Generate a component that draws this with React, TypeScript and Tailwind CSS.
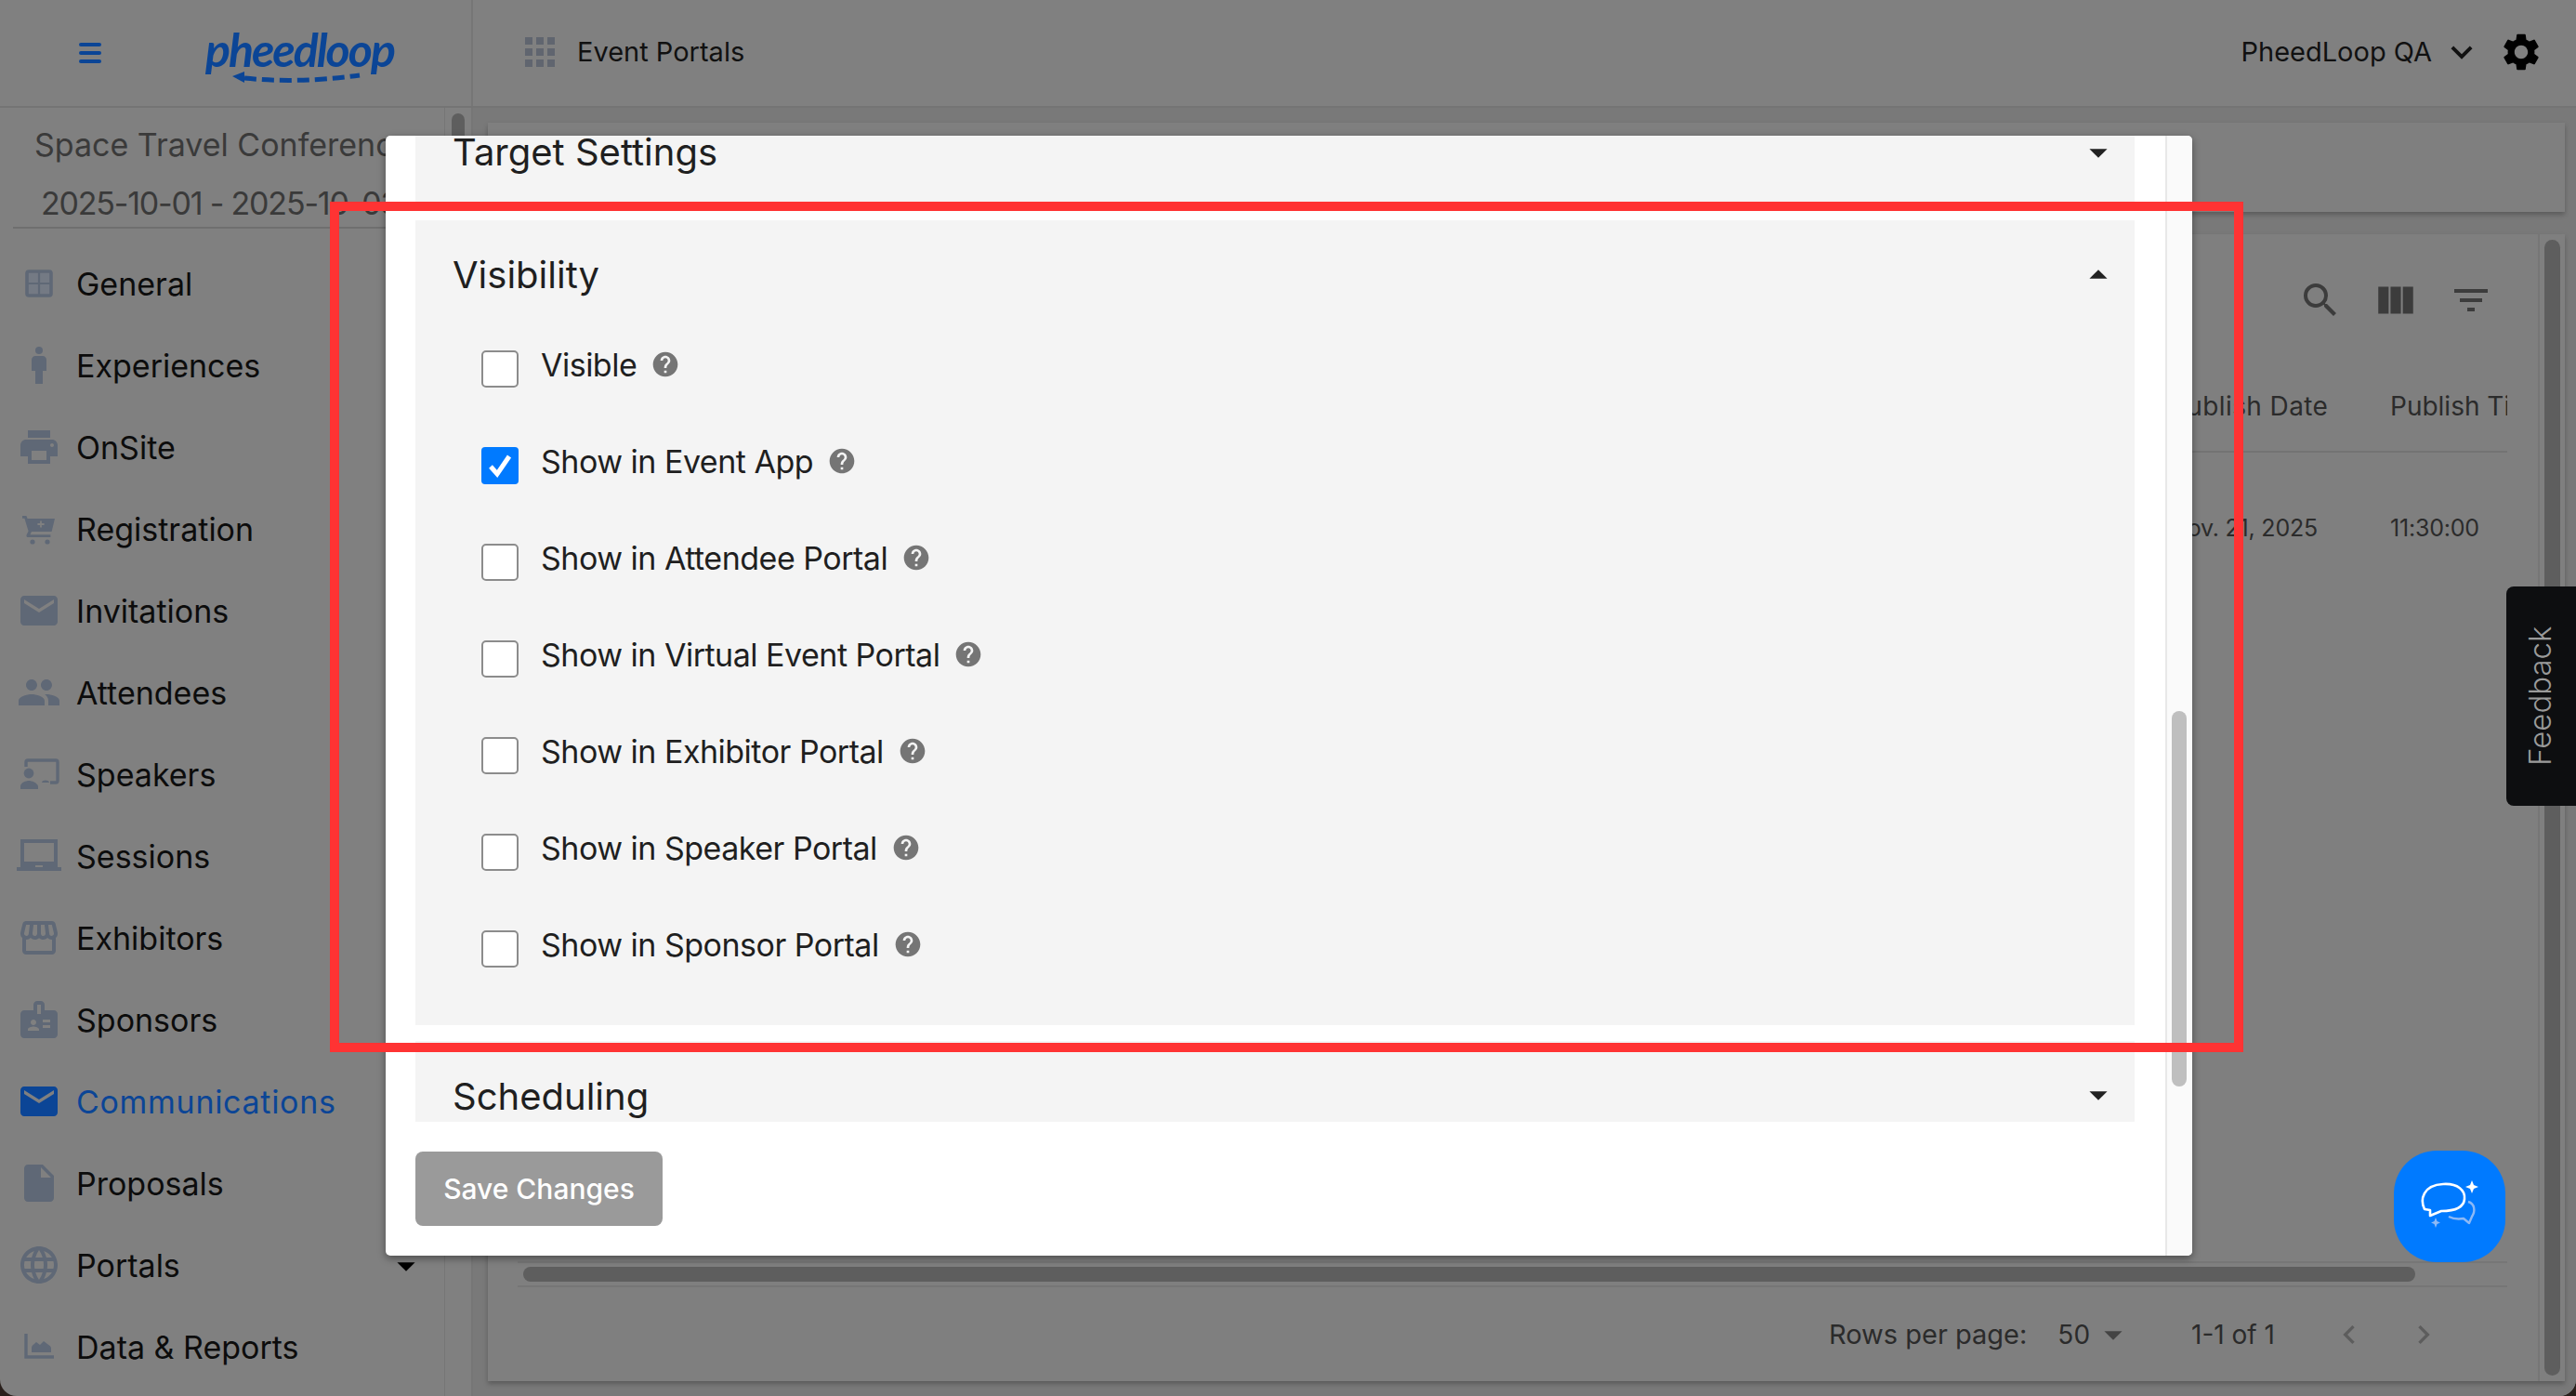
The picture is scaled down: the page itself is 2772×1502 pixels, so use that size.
import {
  MdApps,
  MdArrowDropDown,
  MdArrowDropUp,
  MdBadge,
  MdChevronLeft,
  MdChevronRight,
  MdEmail,
  MdFilterList,
  MdHelp,
  MdInsertDriveFile,
  MdKeyboardArrowDown,
  MdLanguage,
  MdLaptopChromebook,
  MdMan,
  MdPeople,
  MdPrint,
  MdSearch,
  MdSettings,
  MdStorefront,
  MdViewColumn,
} from 'react-icons/md';

type IconProps = { size?: number; className?: string };

function GeneralIcon({ size = 48, className }: IconProps) {
  return (
    <svg width={size} height={size} viewBox="0 0 24 24" className={className} fill="none">
      <rect x="5.5" y="5.5" width="13" height="13" rx="1" stroke="currentColor" strokeWidth="1.8" fill="#747a84" />
      <path d="M12 5.5v13M5.5 12h13" stroke="currentColor" strokeWidth="1.1" />
    </svg>
  );
}

// filled cart with a plus cut out, the md one is only an outline
function CartPlusIcon({ size = 48, className }: IconProps) {
  return (
    <svg width={size} height={size} viewBox="0 0 24 24" className={className} fill="currentColor">
      <path d="M3 5h2.2l.6 1.5H20.5l-1.7 7H8l-.8 1.6h11v1.4H6.2c-.8 0-1.2-.6-.9-1.3l1-1.9L4.2 6.4H3z" />
      <circle cx="8.5" cy="19" r="1.3" />
      <circle cx="16.5" cy="19" r="1.3" />
      <path d="M13 7.7v3.6M11.2 9.5h3.6" stroke="#808080" strokeWidth="0.9" />
    </svg>
  );
}

function SpeakerIcon({ size = 48, className }: IconProps) {
  return (
    <svg width={size} height={size} viewBox="0 0 24 24" className={className} fill="currentColor">
      <path d="M5 8V5.5q0-1 1-1h15q1 0 1 1v10q0 1-1 1h-3" fill="none" stroke="currentColor" strokeWidth="1.7" />
      <circle cx="6.5" cy="11.5" r="2.7" />
      <path d="M2 20v-1.5c0-2 3-3 4.5-3s4.5 1 5 3V20z" />
      <path d="M13.5 16.5c.3-1.6 3.6-1.6 4 0z" />
    </svg>
  );
}

function ReportIcon({ size = 48, className }: IconProps) {
  return (
    <svg width={size} height={size} viewBox="0 0 24 24" className={className} fill="currentColor">
      <path d="M5 5v12.5h15" fill="none" stroke="currentColor" strokeWidth="1.7" />
      <path d="M8 15v-2.5c0-.8.5-1.2 1-1.6l1.5-1.4 2 1.5 2-2 3 2.2c.8.6 1 1 1 1.8v2z" />
    </svg>
  );
}

const navItems = [
  { label: 'General', icon: GeneralIcon },
  { label: 'Experiences', icon: MdMan },
  { label: 'OnSite', icon: MdPrint },
  { label: 'Registration', icon: CartPlusIcon },
  { label: 'Invitations', icon: MdEmail },
  { label: 'Attendees', icon: MdPeople },
  { label: 'Speakers', icon: SpeakerIcon },
  { label: 'Sessions', icon: MdLaptopChromebook },
  { label: 'Exhibitors', icon: MdStorefront },
  { label: 'Sponsors', icon: MdBadge },
  { label: 'Communications', icon: MdEmail, active: true },
  { label: 'Proposals', icon: MdInsertDriveFile },
  { label: 'Portals', icon: MdLanguage, caret: true },
  { label: 'Data & Reports', icon: ReportIcon },
];

const visibilityRows = [
  { label: 'Visible' },
  { label: 'Show in Event App', checked: true },
  { label: 'Show in Attendee Portal' },
  { label: 'Show in Virtual Event Portal' },
  { label: 'Show in Exhibitor Portal' },
  { label: 'Show in Speaker Portal' },
  { label: 'Show in Sponsor Portal' },
];

function Logo() {
  return (
    <div className="relative w-[200px] h-[70px] ml-[112px]">
      <span className="block text-[50px] leading-[62px] italic font-bold tracking-[-2px] text-[#0b4596] font-['Lato',sans-serif]">
        pheedloop
      </span>
      {/* dashed return arrow under the wordmark */}
      <svg className="absolute left-0 top-0" width="200" height="70" viewBox="0 0 200 70" fill="none">
        <path d="M42 62 Q 100 68 166 59" stroke="#0b4596" strokeWidth="5" strokeDasharray="13 6" />
        <path d="M29 60 L42 55 L42 67 Z" fill="#0b4596" />
      </svg>
    </div>
  );
}

function ChatIcon() {
  return (
    <svg width="66" height="58" viewBox="0 0 66 58" fill="none">
      <path
        d="M6 32 C1 22 4 6 26 5 C42 4 50 12 49 21 C48 32 36 34 24 34 L12 39 L12 33 Z"
        stroke="white"
        strokeWidth="2.6"
        strokeLinejoin="round"
      />
      <path d="M57 1 L59 6 L64 8 L59 10 L57 15 L55 10 L50 8 L55 6 Z" fill="white" />
      <path
        d="M53 24 C60 26 61 34 57 40 L54 47 L48 42 C42 43 36 42 32 40"
        stroke="#8db9f5"
        strokeWidth="2.4"
        strokeLinejoin="round"
      />
      <path d="M18 41 L19.5 45 L23 46.5 L19.5 48 L18 52 L16.5 48 L13 46.5 L16.5 45 Z" fill="#8db9f5" />
    </svg>
  );
}

function Sidebar() {
  return (
    <aside className="w-[509px] shrink-0 flex border-r-2 border-[#767676]">
      <div className="w-[479px] shrink-0 border-r border-[#767676] overflow-hidden">
        <div className="ml-[14px] h-[130px] pt-[20px] border-b-2 border-[#6f6f6f] whitespace-nowrap text-[34px] text-[#3a3a3a]">
          <div className="ml-[23px] h-[40px] leading-[40px]">Space Travel Conference</div>
          <div className="ml-[30px] h-[40px] leading-[40px] mt-[23px] tracking-[-1.2px]">2025-10-01 - 2025-10-03</div>
        </div>
        <nav className="pt-[15px]">
          {navItems.map((item) => {
            const Icon = item.icon;
            return (
              <div key={item.label} className="relative flex items-center h-[88px] pl-[18px] gap-[16px]">
                <Icon size={48} className={item.active ? 'text-[#0b4596]' : 'text-[#5f6876]'} />
                <span className={`text-[34px] whitespace-nowrap ${item.active ? 'text-[#0b4596] tracking-[0.7px]' : 'text-[#0c0c0c]'}`}>
                  {item.label}
                </span>
                {item.caret && <MdArrowDropDown size={46} className="absolute left-[414px] top-[22px] text-black" />}
              </div>
            );
          })}
        </nav>
      </div>
      <div className="flex-1 pt-[6px] flex justify-center">
        <div className="w-[14px] h-[60px] rounded-full bg-[#5e5e5e]" />
      </div>
    </aside>
  );
}

function TableArea() {
  return (
    <main className="flex-1 min-w-0 bg-[#797979] pl-[16px] pr-[12px] pt-[16px] flex flex-col">
      <div className="h-[96px] bg-[#7f7f7f] shadow-[0_3px_5px_rgba(0,0,0,0.25)]" />
      <div className="mt-[24px] h-[1234px] bg-[#7f7f7f] shadow-[0_3px_5px_rgba(0,0,0,0.25)] flex">
        <div className="flex-1 min-w-0 flex flex-col text-[#2b2b2b] text-[28px] pl-[32px] pr-[33px]">
          <div className="h-[142px] flex items-center justify-end gap-[32px] mr-[15px] text-[#3c3c3c]">
            <MdSearch size={48} />
            <MdViewColumn size={50} />
            <MdFilterList size={48} />
          </div>
          <div className="h-[93px] flex items-center justify-end pb-[6px] border-b-2 border-[#737373] whitespace-nowrap text-[28px]">
            <span className="w-[237px] tracking-[0.4px]">Publish Date</span>
            <span className="w-[126px] overflow-hidden">Publish Time</span>
          </div>
          <div className="h-[164px] flex items-center justify-end whitespace-nowrap text-[25px] tracking-[-0.2px]">
            <span className="w-[237px]">Nov. 21, 2025</span>
            <span className="w-[126px]">11:30:00</span>
          </div>
          <div className="flex-1" />
          <div className="h-[28px] border-y-2 border-[#767676] flex items-center pl-[6px]">
            <div className="w-[2036px] h-[16px] rounded-full bg-[#5e5e5e]" />
          </div>
          <div className="h-[101px] flex items-center justify-end whitespace-nowrap">
            <span className="text-[29px]">Rows per page:</span>
            <span className="ml-[33px]">50</span>
            <MdArrowDropDown size={46} className="text-[#444444] ml-[2px]" />
            <span className="ml-[61px]">1-1 of 1</span>
            <MdChevronLeft size={40} className="ml-[60px] text-[#5d5d5d]" />
            <MdChevronRight size={40} className="ml-[40px] mr-[70px] text-[#5d5d5d]" />
          </div>
        </div>
        <div className="w-[29px] shrink-0 border-l-2 border-[#767676] py-[6px] flex justify-center">
          <div className="w-[17px] rounded-full bg-[#5e5e5e]" />
        </div>
      </div>
    </main>
  );
}

function AccordionTitle({ children }: { children: string }) {
  return <span className="text-[40px] text-[#1f1f1f]">{children}</span>;
}

function Modal() {
  return (
    <div className="absolute left-[415px] top-[146px] w-[1944px] h-[1205px] bg-white rounded-[5px] shadow-[0_3px_8px_rgba(0,0,0,0.4)] flex overflow-hidden">
      <div className="w-[1915px] shrink-0 pl-[32px] pr-[33px] flex flex-col">
        <div className="h-[71px] shrink-0 bg-[#f4f4f4] pl-[40px] pr-[16px] flex items-start justify-between">
          <div className="h-[36px] flex items-center">
            <AccordionTitle>Target Settings</AccordionTitle>
          </div>
          <MdArrowDropDown size={46} className="text-[#222222] -mt-[5px]" />
        </div>

        <div className="mt-[20px] shrink-0 bg-[#f4f4f4] pb-[30px]">
          <div className="h-[108px] pt-[10px] pl-[40px] pr-[16px] flex items-center justify-between">
            <AccordionTitle>Visibility</AccordionTitle>
            <MdArrowDropUp size={46} className="text-[#222222]" />
          </div>
          {visibilityRows.map((row) => (
            <div key={row.label} className="h-[104px] flex items-center pl-[71px]">
              {row.checked ? (
                <div className="w-[40px] h-[40px] rounded-[4px] bg-[#007aff] flex items-center justify-center">
                  <svg width="28" height="28" viewBox="0 0 28 28" fill="none">
                    <path d="M4 15 L11 23 L24 4" stroke="white" strokeWidth="5" />
                  </svg>
                </div>
              ) : (
                <div className="w-[40px] h-[40px] rounded-[5px] bg-white border-2 border-[#8c8c8c]" />
              )}
              <div className="ml-[24px] mb-[10px] flex items-center gap-[15px]">
                <span className="text-[34px] text-[#1f1f1f] tracking-[-0.5px] whitespace-nowrap">{row.label}</span>
                <MdHelp size={32} className="text-[#757575]" />
              </div>
            </div>
          ))}
        </div>

        <div className="mt-[17px] h-[87px] shrink-0 bg-[#f4f4f4] pl-[40px] pr-[16px] pt-[30px] flex items-start justify-between">
          <AccordionTitle>Scheduling</AccordionTitle>
          <MdArrowDropDown size={46} className="text-[#222222] mt-[5px]" />
        </div>

        <button className="mt-[32px] w-[266px] h-[80px] shrink-0 rounded-[8px] bg-[#9a9a9a] text-white text-[30px] font-medium">
          Save Changes
        </button>
      </div>
      <div className="flex-1 bg-[#fafafa] border-l-2 border-[#e8e8e8] pt-[619px] pl-[5px]">
        <div className="w-[16px] h-[404px] rounded-full bg-[#bfbfbf]" />
      </div>
    </div>
  );
}

export default function App() {
  return (
    <div className="w-[2772px] h-[1502px] bg-[#2a201c] overflow-hidden font-['Inter',sans-serif]">
      <div className="relative w-full h-full bg-[#808080] rounded-b-[18px] overflow-hidden flex flex-col">
        {/* Top bar */}
        <header className="h-[116px] shrink-0 flex items-center border-b-2 border-[#747474]">
          <div className="w-[509px] h-full shrink-0 flex items-center pl-[85px] border-r-2 border-[#767676]">
            <svg width="24" height="22" viewBox="0 0 24 22">
              <rect y="0" width="24" height="4" rx="2" fill="#0b4596" />
              <rect y="9" width="24" height="4" rx="2" fill="#0b4596" />
              <rect y="18" width="24" height="4" rx="2" fill="#0b4596" />
            </svg>
            <Logo />
          </div>
          <MdApps size={48} className="ml-[48px] mb-[3px] text-[#60656f]" />
          <span className="ml-[16px] mb-[3px] text-[29px] text-[#111111]">Event Portals</span>
          <div className="ml-auto flex items-center mr-[35px] mb-[3px]">
            <span className="text-[29px] text-[#111111]">PheedLoop QA</span>
            <MdKeyboardArrowDown size={46} className="ml-[9px] text-[#111111]" />
            <MdSettings size={48} className="ml-[17px] text-black" />
          </div>
        </header>

        <div className="flex-1 min-h-0 flex">
          <Sidebar />
          <TableArea />
        </div>

        <Modal />

        {/* Feedback tab */}
        <div className="absolute right-0 top-[631px] w-[75px] h-[236px] bg-[#0d0e10] rounded-l-[8px] flex items-center justify-center">
          <span className="-rotate-90 text-[33px] font-light text-[#9a9a9a] whitespace-nowrap">Feedback</span>
        </div>

        {/* Chat button */}
        <div className="absolute left-[2576px] top-[1238px] w-[120px] h-[120px] rounded-[46px] bg-[#007aff] flex items-center justify-center">
          <ChatIcon />
        </div>

        {/* Red highlight drawn over the screenshot */}
        <div className="absolute left-[355px] top-[217px] w-[2059px] h-[915px] border-[10px] border-[#ff3333]" />
      </div>
    </div>
  );
}
